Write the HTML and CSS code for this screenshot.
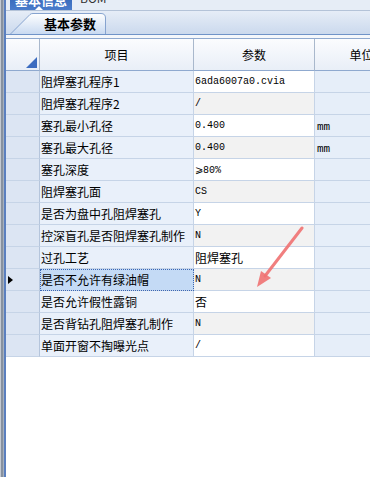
FILE: index.html
```html
<!DOCTYPE html>
<html lang="zh-CN">
<head>
    <meta charset="UTF-8">
    <title>基本参数</title>
    <link rel="stylesheet" href="styles.css">
</head>
<body>
    <div class="window">
        <div class="side"></div>
        <div class="main">
            <!-- 上方标签 -->
            <div class="topbar">
                <div class="toptab">基本信息<span class="caret"></span></div>
                <div class="toplabel">BOM</div>
            </div>

            <!-- 页签 -->
            <div class="tabstrip">
                <div class="tab">
                    <svg class="tab-shape" width="96" height="21" viewBox="0 0 96 21">
                        <defs>
                            <linearGradient id="tabfill" x1="0" y1="0" x2="0" y2="1">
                                <stop offset="0" stop-color="#ffffff"/>
                                <stop offset="1" stop-color="#c9daf1"/>
                            </linearGradient>
                        </defs>
                        <path d="M0.5,21 L20,1.5 Q21,0.5 23,0.5 L91,0.5 Q95.5,0.5 95.5,5 L95.5,21" fill="url(#tabfill)" stroke="#86a3cf"/>
                    </svg>
                    <span class="tab-text">基本参数</span>
                </div>
            </div>
            <div class="gap"></div>

            <!-- 表头 -->
            <div class="grid-head">
                <div class="hcell corner">
                    <svg width="11" height="11" viewBox="0 0 11 11"><path d="M11,0 L11,11 L0,11 Z" fill="#3c6cc0"/></svg>
                </div>
                <div class="hcell">项目</div>
                <div class="hcell">参数</div>
                <div class="hcell">单位</div>
            </div>

            <!-- 数据行 -->
            <div class="grid-body" id="grid-body"></div>
        </div>

        <svg class="arrow" width="370" height="477" viewBox="0 0 370 477">
            <line x1="302" y1="228" x2="265" y2="276" stroke="#f07272" stroke-width="3" stroke-linecap="round" opacity="0.9"/>
            <path d="M257,287 L261,271 L271,278 Z" fill="#f07272" opacity="0.9"/>
        </svg>
    </div>

    <script>
        const rows = [
            { name: '阻焊塞孔程序1', value: '6ada6007a0.cvia' },
            { name: '阻焊塞孔程序2', value: '/' },
            { name: '塞孔最小孔径', value: '0.400', unit: 'mm' },
            { name: '塞孔最大孔径', value: '0.400', unit: 'mm' },
            { name: '塞孔深度', value: '⩾80%' },
            { name: '阻焊塞孔面', value: 'CS' },
            { name: '是否为盘中孔阻焊塞孔', value: 'Y' },
            { name: '控深盲孔是否阻焊塞孔制作', value: 'N' },
            { name: '过孔工艺', value: '阻焊塞孔', cjk: true },
            { name: '是否不允许有绿油帽', value: 'N', selected: true },
            { name: '是否允许假性露铜', value: '否', cjk: true },
            { name: '是否背钻孔阻焊塞孔制作', value: 'N' },
            { name: '单面开窗不掏曝光点', value: '/' }
        ];

        const body = document.getElementById('grid-body');
        body.innerHTML = rows.map((r, i) => `
            <div class="grid-row ${i % 2 ? 'even' : ''} ${r.selected ? 'selected' : ''}">
                <div class="cell rowhead">${r.selected ? '<span class="pointer"></span>' : ''}</div>
                <div class="cell name"><span class="name-text">${r.name}</span></div>
                <div class="cell value ${r.cjk ? 'cjk' : ''}">${r.value}</div>
                <div class="cell unit">${r.unit || ''}</div>
            </div>
        `).join('');
    </script>
</body>
</html>
```

FILE: styles.css
```css
body {
    margin: 0;
    font-family: "Noto Sans CJK SC", sans-serif;
    font-size: 12px;
    color: #000;
    background: #fff;
}
.window {
    position: relative;
    display: flex;
    width: 370px;
    height: 477px;
    overflow: hidden;
}
.side {
    flex: none;
    width: 6px;
    background: linear-gradient(to right, #c3c9d2 0, #c3c9d2 1px, #87919f 1px, #87919f 3px, #a7b0bd 3px, #a7b0bd 4px, #5a7fbf 4px, #5a7fbf 6px);
}
.main {
    flex: 1;
    min-width: 0;
    overflow: hidden;
}
.topbar {
    display: flex;
    height: 10px;
    background: #e6edf6;
    border-bottom: 1px solid #b4c3d8;
    overflow: hidden;
}
.toptab {
    position: relative;
    flex: none;
    width: 62px;
    height: 21px;
    margin: -11px 0 0 4px;
    background: linear-gradient(#2a5db0, #4a7ccb);
    color: #fff;
    font-weight: bold;
    font-size: 13px;
    line-height: 21px;
    text-align: center;
}
.caret {
    position: absolute;
    left: 25px;
    bottom: 0;
    border-left: 4px solid transparent;
    border-right: 4px solid transparent;
    border-bottom: 4px solid #fff;
}
.toplabel {
    margin: -9px 0 0 8px;
    color: #333;
    font-size: 12px;
    line-height: 14px;
}
.tabstrip {
    display: flex;
    align-items: flex-end;
    height: 23px;
    background: linear-gradient(#e6edf7, #cbd9ed);
    border-bottom: 1px solid #6f93c8;
}
.tab {
    position: relative;
    width: 96px;
    height: 21px;
    margin-left: 4px;
    padding-left: 34px;
    box-sizing: border-box;
    font-size: 13px;
    font-weight: bold;
    line-height: 21px;
}
.tab-shape {
    position: absolute;
    left: 0;
    top: 0;
}
.tab-text {
    position: relative;
}
.gap {
    height: 3px;
    background: #f4f7fb;
}
.grid-head,
.grid-row {
    display: grid;
    grid-template-columns: 34px 154px 121px 94px;
}
.grid-head {
    border-top: 1px solid #8fa9cf;
    background: linear-gradient(#fbfcfe, #e8eef7);
}
.hcell {
    display: flex;
    align-items: center;
    justify-content: center;
    height: 32px;
    box-sizing: border-box;
    border-right: 1px solid #a9b8cc;
    border-bottom: 1px solid #8fa9cf;
    white-space: nowrap;
}
.corner {
    justify-content: flex-end;
    align-items: flex-end;
    padding: 0 2px 2px 0;
}
.corner svg {
    display: block;
}
.cell {
    display: flex;
    align-items: center;
    height: 22px;
    box-sizing: border-box;
    padding-left: 1px;
    border-right: 1px solid #c6d4e7;
    border-bottom: 1px solid #c6d4e7;
    white-space: nowrap;
    overflow: hidden;
}
.rowhead {
    background: #dce5f3;
    border-right-color: #b5c5dc;
    padding-left: 2px;
}
.name {
    background: #e9f0fa;
}
.value {
    background: #fff;
    font-family: "Liberation Mono", "DejaVu Sans Mono", monospace;
    font-size: 10px;
}
.value.cjk {
    font-family: "Noto Sans CJK SC", sans-serif;
    font-size: 12px;
}
.even .value {
    background: #f2f2f2;
}
.unit {
    background: #e6eef9;
    padding: 3px 0 0 2px;
    font-family: "Liberation Mono", monospace;
    font-size: 11px;
}
.selected .name {
    background: #c4daf5;
    outline: 1px dotted #3a66b4;
    outline-offset: -1px;
}
.pointer {
    border-top: 4px solid transparent;
    border-bottom: 4px solid transparent;
    border-left: 5px solid #000;
}
.arrow {
    position: absolute;
    left: 0;
    top: 0;
    pointer-events: none;
}
```
